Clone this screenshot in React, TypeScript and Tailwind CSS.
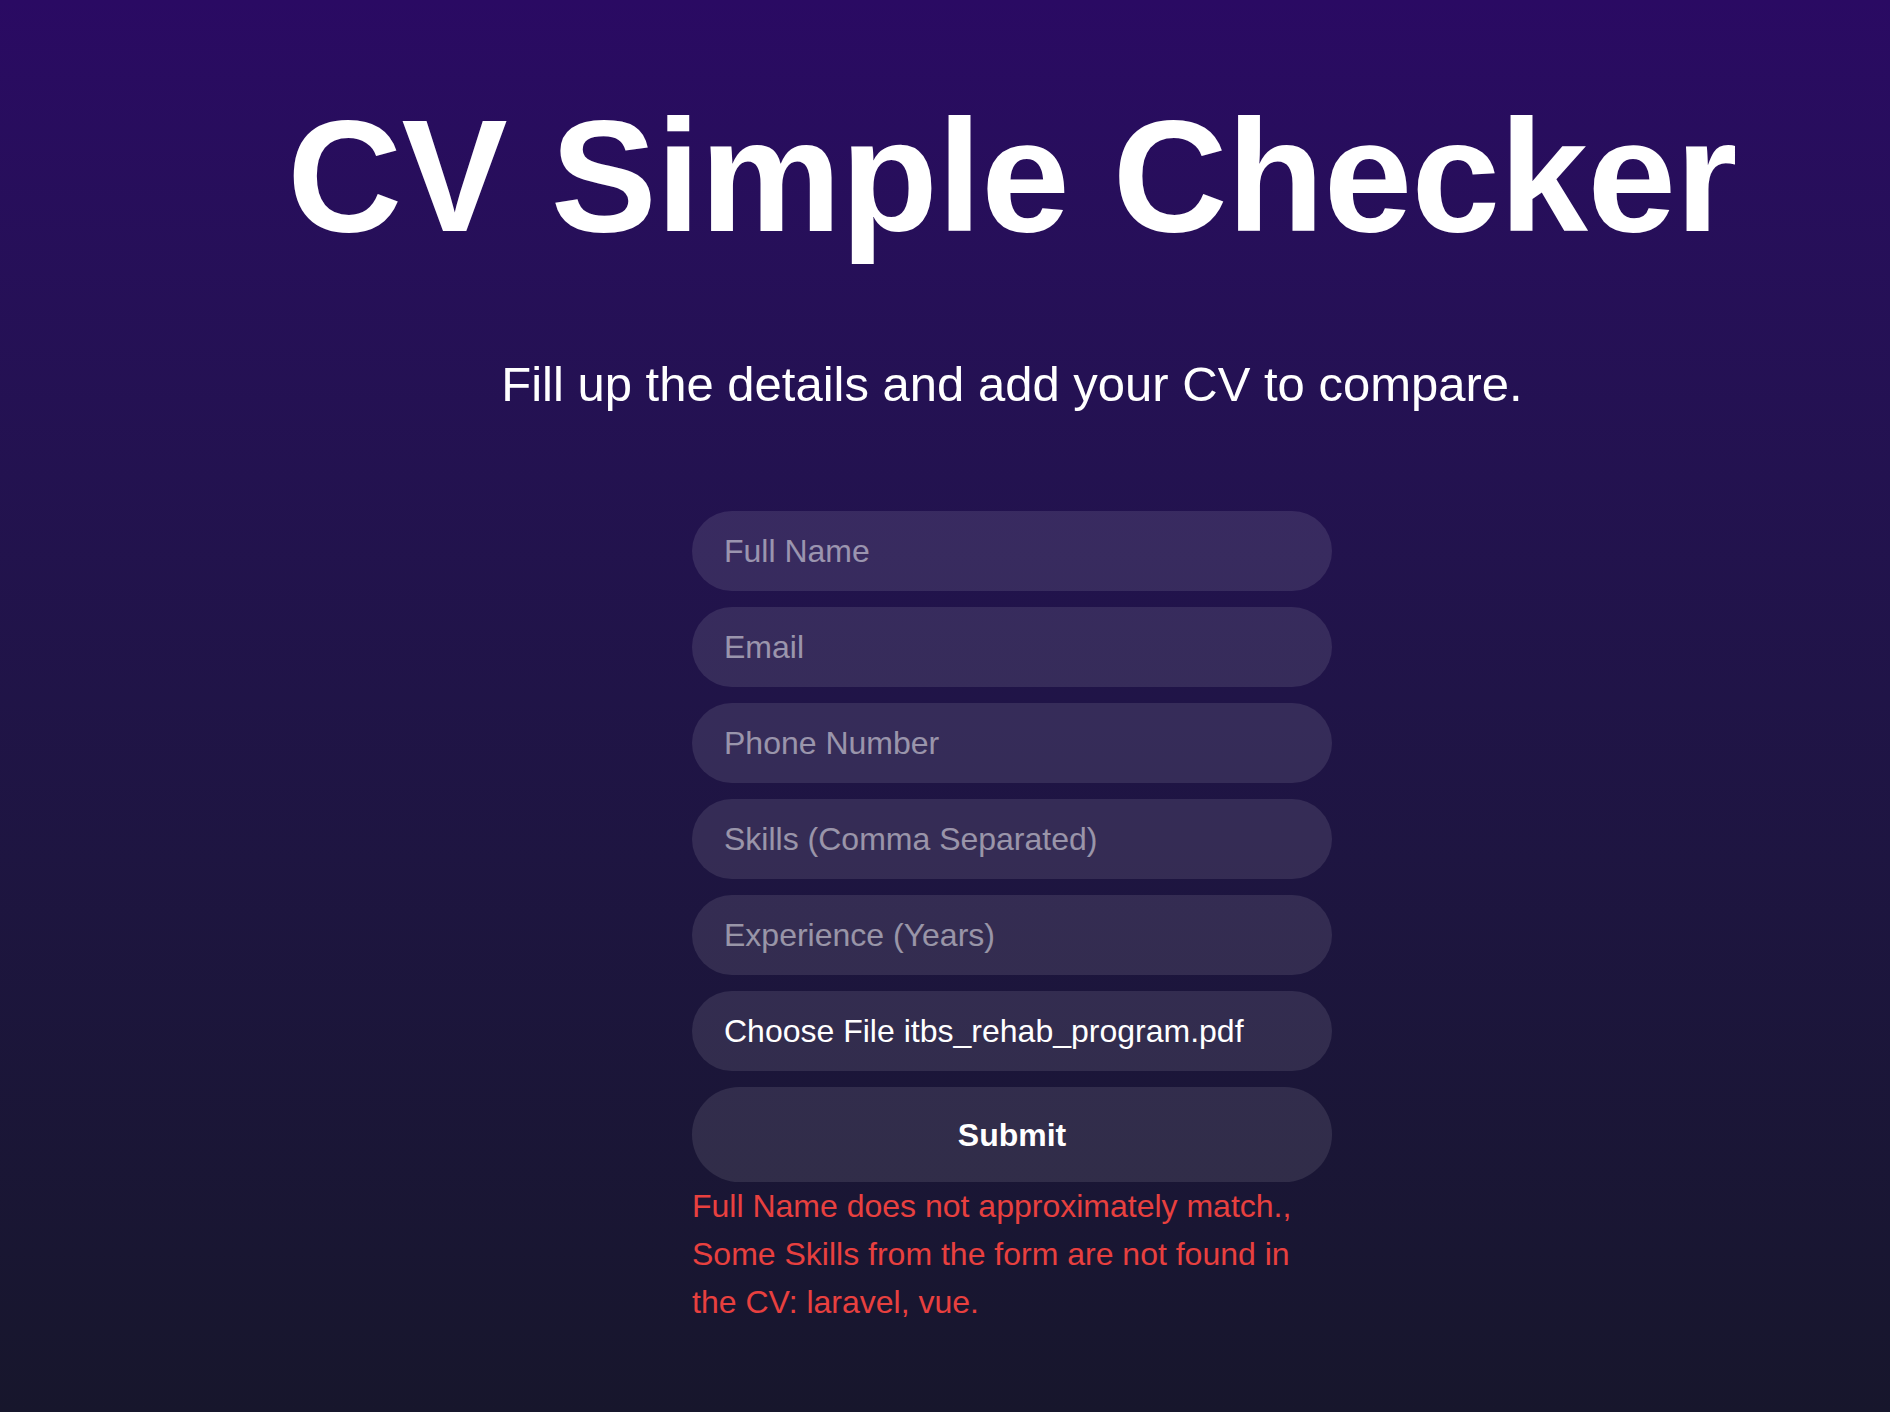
import { useState } from 'react';

const FIELDS = [
  { name: 'fullName', placeholder: 'Full Name', type: 'text' },
  { name: 'email', placeholder: 'Email', type: 'email' },
  { name: 'phone', placeholder: 'Phone Number', type: 'text' },
  { name: 'skills', placeholder: 'Skills (Comma Separated)', type: 'text' },
  { name: 'experience', placeholder: 'Experience (Years)', type: 'text' },
];

const ERRORS = [
  'Full Name does not approximately match.',
  'Some Skills from the form are not found in the CV: laravel, vue.',
];

function App() {
  const [values, setValues] = useState<Record<string, string>>({});

  return (
    <div className="min-h-screen bg-gradient-to-b from-[#2a0a63] to-[#17162c] font-['Liberation_Sans',Arial,sans-serif] text-white">
      <div className="flex flex-col items-center pl-[134px] pt-[97px] pb-10">
        <h1 className="text-[159px] leading-none font-bold tracking-[-0.5px] whitespace-nowrap">
          CV Simple Checker
        </h1>

        <p className="mt-[104px] text-[49px] leading-none">
          Fill up the details and add your CV to compare.
        </p>

        <form
          className="mt-[102px] w-[640px] flex flex-col gap-4"
          onSubmit={(e) => e.preventDefault()}
        >
          {FIELDS.map((f) => (
            <input
              key={f.name}
              type={f.type}
              placeholder={f.placeholder}
              value={values[f.name] ?? ''}
              onChange={(e) => setValues((prev) => ({ ...prev, [f.name]: e.target.value }))}
              className="h-20 w-full rounded-full bg-white/10 px-8 text-[32px] text-white placeholder:text-white/50 outline-none"
            />
          ))}

          {/* file picker, shown as Safari draws it */}
          <label className="flex h-20 w-full cursor-pointer items-center rounded-full bg-white/10 px-8 text-[32px] text-white">
            <span>Choose File</span>
            <span className="ml-[9px]">itbs_rehab_program.pdf</span>
            <input type="file" className="hidden" />
          </label>

          <div>
            <button
              type="submit"
              className="h-[95px] w-full rounded-full bg-white/10 text-[32px] font-bold text-white"
            >
              Submit
            </button>
            <p className="text-[32px] leading-[48px] text-[#e8403f]">{ERRORS.join(', ')}</p>
          </div>
        </form>
      </div>
    </div>
  );
}

export default App;
